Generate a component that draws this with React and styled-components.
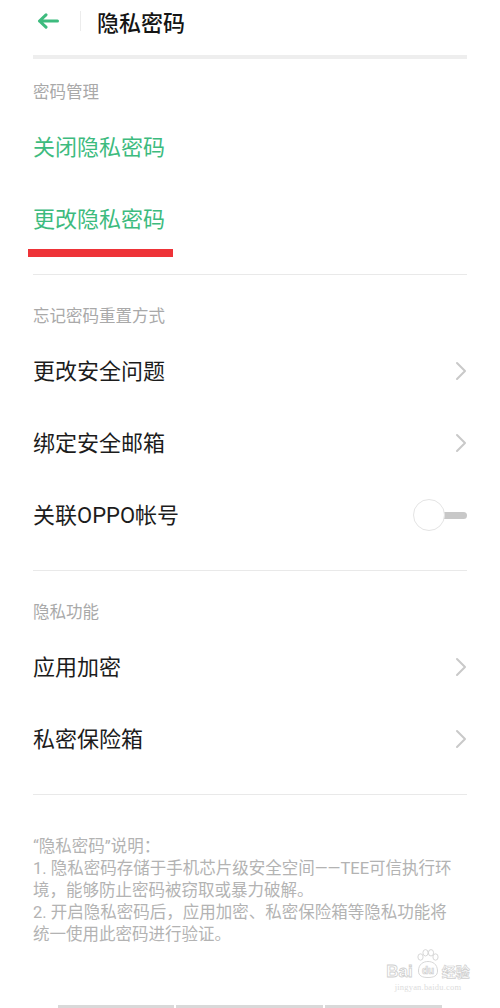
import React from "react";
import styled, { createGlobalStyle } from "styled-components";

const GREEN = "#3dbb7e";

const Global = createGlobalStyle`
  html, body { margin: 0; padding: 0; background: #ffffff; }
  body { font-family: "Noto Sans CJK SC", "Noto Sans", sans-serif; }
  * { box-sizing: border-box; }
`;

const Page = styled.div`
  position: relative;
  width: 500px;
  min-height: 1008px;
  display: flex;
  flex-direction: column;
  background: #fff;
  overflow: hidden;
`;

const Content = styled.div`
  padding: 0 33px;
  display: flex;
  flex-direction: column;
`;

const Header = styled.header`
  height: 42px;
  display: flex;
  align-items: center;
  padding-left: 4px;
`;

const BackButton = styled.div`
  width: 22px;
  height: 16px;
  display: flex;
  align-items: center;
`;

const HeaderDivider = styled.div`
  width: 1px;
  height: 20px;
  background: #ececec;
  margin-left: 21px;
`;

const Title = styled.h1`
  margin: 0 0 0 16px;
  font-size: 22px;
  font-weight: 500;
  color: #151515;
  line-height: 30px;
`;

const TopBar = styled.div`
  margin-top: 13px;
  height: 4px;
  background: #eeeeee;
`;

const Section = styled.section`
  display: flex;
  flex-direction: column;
  padding-top: ${(p) => p.$top}px;
  padding-bottom: 19px;
  border-bottom: 1px solid #e9e9e9;
`;

const SectionTitle = styled.div`
  height: 24px;
  line-height: 24px;
  font-size: 16.5px;
  color: #a9a9a9;
  margin-bottom: 8px;
`;

const Row = styled.div`
  position: relative;
  height: 72px;
  display: flex;
  align-items: center;
  justify-content: space-between;
`;

const RowLabel = styled.span`
  font-family: "Roboto", "Noto Sans CJK SC", sans-serif;
  font-size: 22px;
  line-height: 30px;
  padding-top: 2px;
  color: ${(p) => (p.$accent ? GREEN : "#1c1c1c")};
`;

const Highlight = styled.div`
  position: absolute;
  left: -5px;
  top: 66px;
  width: 145px;
  height: 8px;
  background: #ee3338;
`;

const Chevron = styled.svg`
  width: 12px;
  height: 20px;
  flex: none;
`;

const Toggle = styled.div`
  position: relative;
  width: 54px;
  height: 32px;
  flex: none;
`;

const ToggleTrack = styled.div`
  position: absolute;
  right: 0;
  top: 13px;
  width: 26px;
  height: 7px;
  border-radius: 4px;
  background: #c8c8c8;
`;

const ToggleKnob = styled.div`
  position: absolute;
  left: 0;
  top: 0;
  width: 32px;
  height: 32px;
  border-radius: 50%;
  background: #fff;
  border: 1px solid #e4e4e4;
`;

const Note = styled.p`
  margin: 41px 0 0;
  font-family: "Roboto", "Noto Sans CJK SC", sans-serif;
  font-size: 16.5px;
  line-height: 22px;
  color: #b3b3b3;
  white-space: pre-line;
`;

const Footer = styled.div`
  margin-top: auto;
  display: flex;
  gap: 2px;
  padding-left: 58px;
  height: 3px;
`;

const FooterSeg = styled.div`
  width: ${(p) => p.$w}px;
  height: 3px;
  background: #d9d9d9;
`;

const Watermark = styled.div`
  position: absolute;
  left: 381px;
  top: 949px;
  width: 94px;
  display: flex;
  flex-direction: column;
  align-items: center;
  pointer-events: none;
`;

const WmTop = styled.div`
  display: flex;
  align-items: flex-end;
  gap: 1px;
`;

const WmWord = styled.span`
  font-family: "Liberation Sans", Arial, sans-serif;
  font-size: 17px;
  font-weight: 700;
  line-height: 15px;
  color: transparent;
  -webkit-text-stroke: 0.8px #cfcfcf;
`;

const WmCn = styled.span`
  font-size: 14px;
  line-height: 15px;
  font-weight: 700;
  color: transparent;
  -webkit-text-stroke: 0.7px #cfcfcf;
`;

const WmUrl = styled.span`
  font-family: "Liberation Serif", serif;
  font-size: 8.5px;
  line-height: 10px;
  margin-top: 3px;
  color: #dcdcdc;
  letter-spacing: 0.2px;
`;

const ChevronIcon = () => (
  <Chevron viewBox="0 0 12 20">
    <path d="M2 2 L10 10 L2 18" fill="none" stroke="#c9c9c9" strokeWidth="2" strokeLinecap="round" strokeLinejoin="round" />
  </Chevron>
);

const PawDu = () => (
  <svg width="27" height="30" viewBox="0 0 26 30">
    <g fill="none" stroke="#d2d2d2" strokeWidth="0.9">
      <ellipse cx="6" cy="8" rx="2.6" ry="3.2" />
      <ellipse cx="11" cy="3.8" rx="2.6" ry="3.2" />
      <ellipse cx="16.5" cy="3.8" rx="2.6" ry="3.2" />
      <ellipse cx="21" cy="8" rx="2.6" ry="3.2" />
      <path d="M4 22 C4 15 9 12.5 13.5 12.5 C18 12.5 23 15 23 22 C23 27 19 28.5 13.5 28.5 C8 28.5 4 27 4 22 Z" />
    </g>
    <text x="13.5" y="25" textAnchor="middle" fontFamily="Liberation Sans, Arial, sans-serif" fontSize="10" fontWeight="700" fill="none" stroke="#cfcfcf" strokeWidth="0.7">du</text>
  </svg>
);

const rows1 = [
  { label: "关闭隐私密码", accent: true },
  { label: "更改隐私密码", accent: true, mark: true },
];

const rows2 = [
  { label: "更改安全问题", kind: "chevron" },
  { label: "绑定安全邮箱", kind: "chevron" },
  { label: "关联OPPO帐号", kind: "toggle" },
];

const rows3 = [
  { label: "应用加密", kind: "chevron" },
  { label: "私密保险箱", kind: "chevron" },
];

const Item = ({ label, accent, mark, kind }) => (
  <Row>
    <RowLabel $accent={accent}>{label}</RowLabel>
    {kind === "chevron" && <ChevronIcon />}
    {kind === "toggle" && (
      <Toggle>
        <ToggleTrack />
        <ToggleKnob />
      </Toggle>
    )}
    {mark && <Highlight />}
  </Row>
);

export default function App() {
  return (
    <>
      <Global />
      <Page>
        <Content>
          <Header>
            <BackButton>
              <svg width="22" height="16" viewBox="0 0 22 16">
                <path d="M20.5 8 H2.5 M9 1.8 L2.5 8 L9 14.2" fill="none" stroke={GREEN} strokeWidth="3" strokeLinecap="round" strokeLinejoin="round" />
              </svg>
            </BackButton>
            <HeaderDivider />
            <Title>隐私密码</Title>
          </Header>
          <TopBar />

          <Section $top={20}>
            <SectionTitle>密码管理</SectionTitle>
            {rows1.map((r) => (
              <Item key={r.label} {...r} />
            ))}
          </Section>

          <Section $top={28}>
            <SectionTitle>忘记密码重置方式</SectionTitle>
            {rows2.map((r) => (
              <Item key={r.label} {...r} />
            ))}
          </Section>

          <Section $top={28}>
            <SectionTitle>隐私功能</SectionTitle>
            {rows3.map((r) => (
              <Item key={r.label} {...r} />
            ))}
          </Section>

          <Note>
            {"\u201C隐私密码\u201D说明：\n1. 隐私密码存储于手机芯片级安全空间——TEE可信执行环\n境，能够防止密码被窃取或暴力破解。\n2. 开启隐私密码后，应用加密、私密保险箱等隐私功能将\n统一使用此密码进行验证。"}
          </Note>
        </Content>

        <Footer>
          <FooterSeg $w={116} />
          <FooterSeg $w={147} />
          <FooterSeg $w={117} />
        </Footer>

        <Watermark>
          <WmTop>
            <WmWord>Bai</WmWord>
            <PawDu />
            <WmCn>经验</WmCn>
          </WmTop>
          <WmUrl>jingyan.baidu.com</WmUrl>
        </Watermark>
      </Page>
    </>
  );
}
